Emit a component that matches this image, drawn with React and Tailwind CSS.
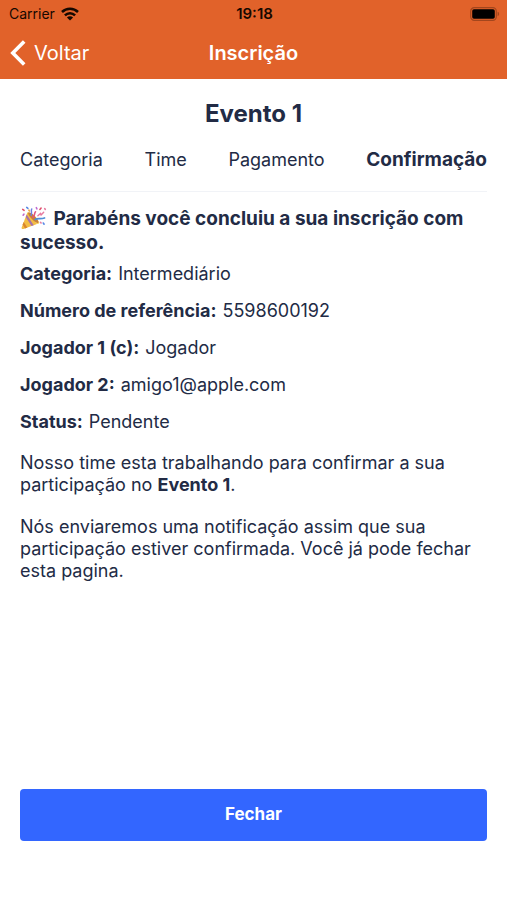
import React from 'react';

const steps = ['Categoria', 'Time', 'Pagamento', 'Confirmação'];

const details = [
  { label: 'Categoria:', value: 'Intermediário' },
  { label: 'Número de referência:', value: '5598600192' },
  { label: 'Jogador 1 (c):', value: 'Jogador' },
  { label: 'Jogador 2:', value: 'amigo1@apple.com' },
  { label: 'Status:', value: 'Pendente' },
];

const WifiIcon = () => (
  <svg width="18" height="14" viewBox="0 0 18 14" fill="none" stroke="#160800" strokeWidth="2.5" aria-hidden="true">
    <path d="M1 5C5.4 0.6 12.6 0.6 17 5" />
    <path d="M3.9 8.3C6.8 5.4 11.2 5.4 14.1 8.3" />
    <path d="M9 13.6L5.9 10.5C7.6 8.8 10.4 8.8 12.1 10.5Z" fill="#160800" stroke="none" />
  </svg>
);

const BatteryIcon = () => (
  <svg width="30" height="14" viewBox="0 0 30 14" aria-hidden="true">
    <rect x="0.7" y="0.7" width="25.6" height="12.6" rx="3.6" fill="none" stroke="#a3461d" strokeWidth="1.2" />
    <rect x="2.2" y="2.2" width="22.6" height="9.6" rx="1.8" fill="#000" />
    <path d="M27.6 4.8C29.6 5.4 29.6 8.6 27.6 9.2Z" fill="#a3461d" />
  </svg>
);

const PartyIcon = () => (
  <svg
    className="mr-0.5 inline-block align-[-5px]"
    width="27"
    height="24"
    viewBox="0 0 26 24"
    fill="none"
    strokeLinecap="round"
    role="img"
    aria-label="Festa"
  >
    <path d="M7 6.2L1.2 21.2C0.8 22.6 1.6 23.4 3 23L18.5 17.2C17.6 12.6 12 6.8 7 6.2Z" fill="#f3bd45" />
    <path d="M6.2 8.4L13.2 19.2L11 20L5.2 11Z" fill="#a873a8" />
    <path d="M3.2 16L6.8 21.6L4.5 22.4L2.2 18.6Z" fill="#d9842e" />
    <path d="M9.2 7L16 18.1L18.5 17.2C17.6 12.6 13.6 8.4 9.2 7Z" fill="#f7d568" />
    <ellipse cx="12.8" cy="11.6" rx="2" ry="7.2" transform="rotate(-44 12.8 11.6)" fill="#c98038" />
    <path d="M12.4 11.2C14.6 10 13.4 7.4 15 5.8" stroke="#e2557e" strokeWidth="1.6" />
    <path d="M14.8 13.4C17.4 11.6 19.6 13.4 24 12" stroke="#4f8fd8" strokeWidth="1.8" />
    <path d="M10.6 9.2C12 7.2 10 5.4 11.2 3" stroke="#6d7fe0" strokeWidth="1.5" />
    <path d="M17.4 9.8L20 7.4L20.6 9L23.2 6.2" stroke="#e77ba0" strokeWidth="1.4" />
    <g strokeWidth="1.6">
      <path d="M2.2 3.4L3.6 4.4M19.4 3.4L20.6 2" stroke="#e0506c" />
      <path d="M6.2 1.4L7.4 2.4M22.8 17L23.6 18.2" stroke="#5a8ae6" />
      <path d="M3.4 8.2L2.6 9.2M15.8 1.6L16.4 2.8" stroke="#c06ad0" />
      <path d="M24.2 2.6L24.8 3.4M20 16.4L20.6 17" stroke="#e77ba0" />
      <path d="M8.4 4.2L8.8 5" stroke="#e9a43a" />
    </g>
  </svg>
);

const Header = () => (
  <header className="bg-[#e1622a]">
    <div className="grid h-[27px] grid-cols-3 items-center pl-[9px] pr-[7px] text-sm text-[#160800]">
      <div className="flex items-center gap-1.5">
        <span>Carrier</span>
        <WifiIcon />
      </div>
      <span className="text-center text-[15px] font-semibold">19:18</span>
      <div className="flex justify-end">
        <BatteryIcon />
      </div>
    </div>
    <div className="grid h-[52px] grid-cols-3 items-center px-2.5 text-xl text-white">
      <button type="button" className="flex items-center gap-2 justify-self-start">
        <svg width="16" height="26" viewBox="0 0 16 26" fill="none" stroke="#fff" strokeWidth="3.6" aria-hidden="true">
          <path d="M14.2 1.6L2.8 13L14.2 24.4" />
        </svg>
        <span>Voltar</span>
      </button>
      <h1 className="text-center font-semibold">Inscrição</h1>
    </div>
  </header>
);

const App = () => {
  return (
    <div className="flex min-h-screen flex-col bg-white font-['Inter',sans-serif] text-[#222b45]">
      <Header />
      <main className="flex flex-1 flex-col px-5 pb-[59px] pt-[21px]">
        <h2 className="text-center text-2xl leading-7 font-bold">Evento 1</h2>
        <ol className="mt-5 flex items-center justify-between border-b border-[#f1f3f7] pb-[19px] text-lg leading-6">
          {steps.map((step) => (
            <li
              key={step}
              className={step === 'Confirmação' ? 'text-[19px] font-bold' : ''}
              aria-current={step === 'Confirmação' ? 'step' : undefined}
            >
              {step}
            </li>
          ))}
        </ol>

        <h3 className="mt-3.5 text-[19px] leading-6 font-bold">
          <PartyIcon /> Parabéns você concluiu a sua inscrição com sucesso.
        </h3>
        <dl className="mt-2 flex flex-col gap-[15px] text-lg leading-[22px]">
          {details.map(({ label, value }) => (
            <div key={label} className="flex gap-1.5">
              <dt className="font-bold">{label}</dt>
              <dd>{value}</dd>
            </div>
          ))}
        </dl>
        <p className="mt-[19px] text-lg leading-[22px]">
          Nosso time esta trabalhando para confirmar a sua participação no <strong>Evento 1</strong>.
        </p>
        <p className="mt-5 text-lg leading-[22px]">
          Nós enviaremos uma notificação assim que sua participação estiver confirmada. Você já pode fechar esta pagina.
        </p>

        <button type="button" className="mt-auto h-[52px] w-full rounded bg-[#3366ff] text-[17px] font-bold text-white">
          Fechar
        </button>
      </main>
    </div>
  );
};

export default App;
